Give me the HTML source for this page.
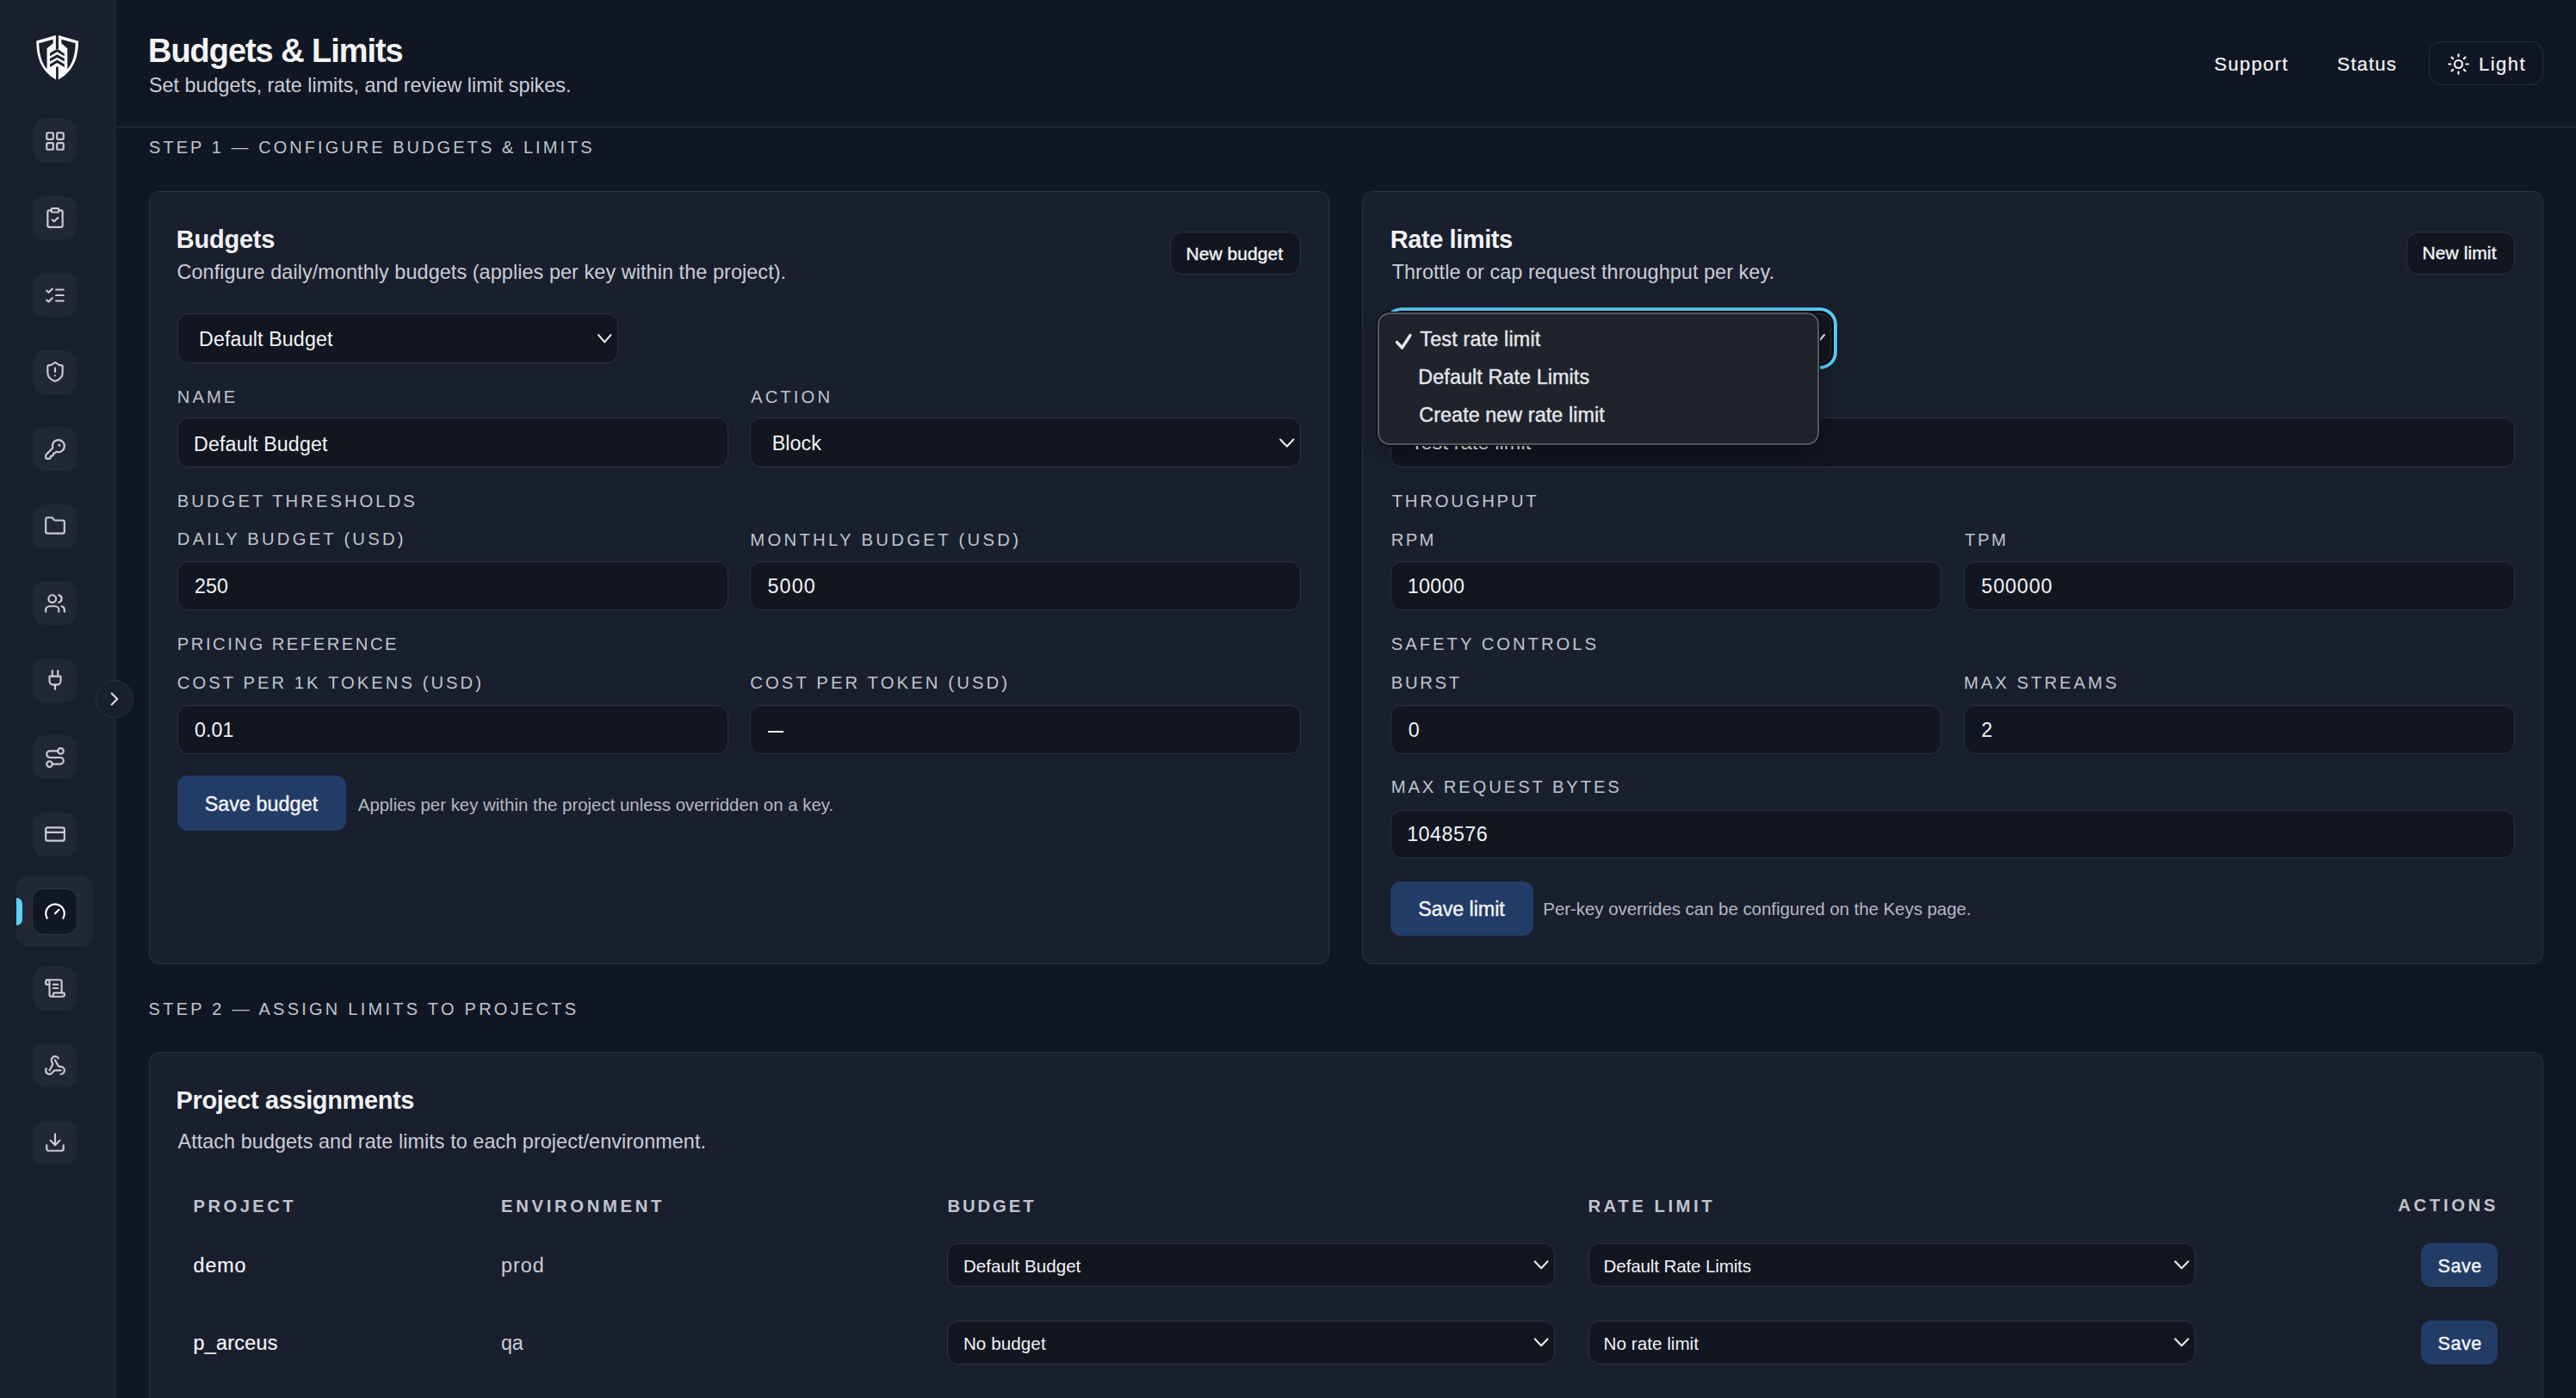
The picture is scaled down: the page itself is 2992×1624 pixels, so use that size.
<!DOCTYPE html>
<html><head><meta charset="utf-8"><title>Budgets &amp; Limits</title>
<style>
html,body{margin:0;padding:0;}
body{width:2992px;height:1624px;position:relative;overflow:hidden;background:#111722;font-family:"Liberation Sans",sans-serif;}
.t{position:absolute;white-space:pre;}
</style></head><body>
<script>(function(){var d=window.devicePixelRatio||1,w=window.innerWidth||2992;if(d>1.01&&Math.abs(w*d-2992)<4){document.documentElement.style.zoom=(1/d);}})();</script>
<div style="position:absolute;left:0px;top:0px;width:133px;height:1624px;background:#191f2c;border-radius:0px;"></div>
<div style="position:absolute;left:133px;top:0px;width:1px;height:1624px;background:#2a303c;border-radius:0px;"></div>
<svg style="position:absolute;left:30px;top:30px" width="74" height="70" viewBox="0 0 1478 1398">
<path fill="#fafafa" d="M245,350 L725,208 L1220,355 C1218,800 1060,1090 728,1262 C395,1090 245,800 245,350 Z"/>
<g fill="#191f2c">
<rect x="697" y="190" width="60" height="355"/>
<path d="M305,402 L632,315 L632,402 L490,522 L490,1005 C385,880 312,700 305,402 Z"/>
<path d="M1152,402 L825,315 L825,405 L965,525 L965,1005 C1070,880 1145,700 1152,402 Z"/>
<path d="M560,632 L700,548 L757,548 L895,650 L895,703 L727,605 L560,703 Z"/>
<path d="M560,760 L727,662 L895,760 L895,830 L727,732 L560,830 Z"/>
<path d="M560,887 L727,787 L895,887 L895,957 L727,857 L560,957 Z"/>
<path d="M700,1270 L700,960 Q727,925 755,960 L755,1270 Z"/>
</g></svg>
<div style="position:absolute;left:38px;top:138.0px;width:51px;height:51.0px;background:#212733;border-radius:14px;"></div>
<svg style="position:absolute;left:50.5px;top:150.5px;color:#c8ccd4" width="26" height="26" viewBox="0 0 24 24" fill="none" stroke="#c8ccd4" stroke-width="2" stroke-linecap="round" stroke-linejoin="round"><rect width="7" height="7" x="3" y="3" rx="1"/><rect width="7" height="7" x="14" y="3" rx="1"/><rect width="7" height="7" x="14" y="14" rx="1"/><rect width="7" height="7" x="3" y="14" rx="1"/></svg>
<div style="position:absolute;left:38px;top:227.5px;width:51px;height:51.0px;background:#212733;border-radius:14px;"></div>
<svg style="position:absolute;left:50.5px;top:240.0px;color:#c8ccd4" width="26" height="26" viewBox="0 0 24 24" fill="none" stroke="#c8ccd4" stroke-width="2" stroke-linecap="round" stroke-linejoin="round"><rect width="8" height="4" x="8" y="2" rx="1" ry="1"/><path d="M16 4h2a2 2 0 0 1 2 2v14a2 2 0 0 1-2 2H6a2 2 0 0 1-2-2V6a2 2 0 0 1 2-2h2"/><path d="m9 14 2 2 4-4"/></svg>
<div style="position:absolute;left:38px;top:317.0px;width:51px;height:51.0px;background:#212733;border-radius:14px;"></div>
<svg style="position:absolute;left:50.5px;top:329.5px;color:#c8ccd4" width="26" height="26" viewBox="0 0 24 24" fill="none" stroke="#c8ccd4" stroke-width="2" stroke-linecap="round" stroke-linejoin="round"><path d="m3 17 2 2 4-4"/><path d="m3 7 2 2 4-4"/><path d="M13 6h8"/><path d="M13 12h8"/><path d="M13 18h8"/></svg>
<div style="position:absolute;left:38px;top:406.5px;width:51px;height:51.0px;background:#212733;border-radius:14px;"></div>
<svg style="position:absolute;left:50.5px;top:419.0px;color:#c8ccd4" width="26" height="26" viewBox="0 0 24 24" fill="none" stroke="#c8ccd4" stroke-width="2" stroke-linecap="round" stroke-linejoin="round"><path d="M20 13c0 5-3.5 7.5-7.66 8.95a1 1 0 0 1-.67-.01C7.5 20.5 4 18 4 13V6a1 1 0 0 1 1-1c2 0 4.5-1.2 6.24-2.72a1.17 1.17 0 0 1 1.52 0C14.51 3.810 17 5 19 5a1 1 0 0 1 1 1z"/><path d="M12 8v4"/><path d="M12 16h.01"/></svg>
<div style="position:absolute;left:38px;top:496.0px;width:51px;height:51.0px;background:#212733;border-radius:14px;"></div>
<svg style="position:absolute;left:50.5px;top:508.5px;color:#c8ccd4" width="26" height="26" viewBox="0 0 24 24" fill="none" stroke="#c8ccd4" stroke-width="2" stroke-linecap="round" stroke-linejoin="round"><path d="M2.586 17.414A2 2 0 0 0 2 18.828V21a1 1 0 0 0 1 1h3a1 1 0 0 0 1-1v-1a1 1 0 0 1 1-1h1a1 1 0 0 0 1-1v-1a1 1 0 0 1 1-1h.172a2 2 0 0 0 1.414-.586l.814-.814a6.5 6.5 0 1 0-4-4z"/><circle cx="16.5" cy="7.5" r=".5" fill="currentColor"/></svg>
<div style="position:absolute;left:38px;top:585.5px;width:51px;height:51.0px;background:#212733;border-radius:14px;"></div>
<svg style="position:absolute;left:50.5px;top:598.0px;color:#c8ccd4" width="26" height="26" viewBox="0 0 24 24" fill="none" stroke="#c8ccd4" stroke-width="2" stroke-linecap="round" stroke-linejoin="round"><path d="M20 20a2 2 0 0 0 2-2V8a2 2 0 0 0-2-2h-7.9a2 2 0 0 1-1.69-.9L9.6 3.9A2 2 0 0 0 7.930 3H4a2 2 0 0 0-2 2v13a2 2 0 0 0 2 2Z"/></svg>
<div style="position:absolute;left:38px;top:675.0px;width:51px;height:51.0px;background:#212733;border-radius:14px;"></div>
<svg style="position:absolute;left:50.5px;top:687.5px;color:#c8ccd4" width="26" height="26" viewBox="0 0 24 24" fill="none" stroke="#c8ccd4" stroke-width="2" stroke-linecap="round" stroke-linejoin="round"><path d="M16 21v-2a4 4 0 0 0-4-4H6a4 4 0 0 0-4 4v2"/><circle cx="9" cy="7" r="4"/><path d="M22 21v-2a4 4 0 0 0-3-3.87"/><path d="M16 3.13a4 4 0 0 1 0 7.75"/></svg>
<div style="position:absolute;left:38px;top:764.5px;width:51px;height:51.0px;background:#212733;border-radius:14px;"></div>
<svg style="position:absolute;left:50.5px;top:777.0px;color:#c8ccd4" width="26" height="26" viewBox="0 0 24 24" fill="none" stroke="#c8ccd4" stroke-width="2" stroke-linecap="round" stroke-linejoin="round"><path d="M12 22v-5"/><path d="M9 8V2"/><path d="M15 8V2"/><path d="M18 8v5a4 4 0 0 1-4 4h-4a4 4 0 0 1-4-4V8Z"/></svg>
<div style="position:absolute;left:38px;top:854.0px;width:51px;height:51.0px;background:#212733;border-radius:14px;"></div>
<svg style="position:absolute;left:50.5px;top:866.5px;color:#c8ccd4" width="26" height="26" viewBox="0 0 24 24" fill="none" stroke="#c8ccd4" stroke-width="2" stroke-linecap="round" stroke-linejoin="round"><circle cx="6" cy="19" r="3"/><path d="M9 19h8.5a3.5 3.5 0 0 0 0-7h-11a3.5 3.5 0 0 1 0-7H15"/><circle cx="18" cy="5" r="3"/></svg>
<div style="position:absolute;left:38px;top:943.5px;width:51px;height:51.0px;background:#212733;border-radius:14px;"></div>
<svg style="position:absolute;left:50.5px;top:956.0px;color:#c8ccd4" width="26" height="26" viewBox="0 0 24 24" fill="none" stroke="#c8ccd4" stroke-width="2" stroke-linecap="round" stroke-linejoin="round"><rect width="20" height="14" x="2" y="5" rx="2"/><line x1="2" x2="22" y1="10" y2="10"/></svg>
<div style="position:absolute;left:19px;top:1016.5px;width:88.5px;height:83.5px;background:#212733;border-radius:15px;"></div>
<div style="position:absolute;left:37px;top:1032px;width:53px;height:54px;background:#111722;border-radius:14px;border:1px solid #2c323e;box-sizing:border-box;"></div>
<div style="position:absolute;left:19px;top:1043px;width:7px;height:32px;background:#5fd0f8;border-radius:0px;border-radius:0 7px 7px 0;"></div>
<svg style="position:absolute;left:50.5px;top:1046.0px;color:#ffffff" width="26" height="26" viewBox="0 0 24 24" fill="none" stroke="#ffffff" stroke-width="2" stroke-linecap="round" stroke-linejoin="round"><path d="m12 14 4-4"/><path d="M3.34 19a10 10 0 1 1 17.32 0"/></svg>
<div style="position:absolute;left:38px;top:1122.5px;width:51px;height:51.0px;background:#212733;border-radius:14px;"></div>
<svg style="position:absolute;left:50.5px;top:1135.0px;color:#c8ccd4" width="26" height="26" viewBox="0 0 24 24" fill="none" stroke="#c8ccd4" stroke-width="2" stroke-linecap="round" stroke-linejoin="round"><path d="M15 12h-5"/><path d="M15 8h-5"/><path d="M19 17V5a2 2 0 0 0-2-2H4"/><path d="M8 21h12a2 2 0 0 0 2-2v-1a1 1 0 0 0-1-1H11a1 1 0 0 0-1 1v1a2 2 0 1 1-4 0V5a2 2 0 1 0-4 0v2a1 1 0 0 0 1 1h3"/></svg>
<div style="position:absolute;left:38px;top:1212.0px;width:51px;height:51.0px;background:#212733;border-radius:14px;"></div>
<svg style="position:absolute;left:50.5px;top:1224.5px;color:#c8ccd4" width="26" height="26" viewBox="0 0 24 24" fill="none" stroke="#c8ccd4" stroke-width="2" stroke-linecap="round" stroke-linejoin="round"><path d="M18 16.98h-5.99c-1.1 0-1.95.94-2.48 1.9A4 4 0 0 1 2 17c.01-.7.2-1.4.57-2"/><path d="m6 17 3.13-5.78c.53-.97.1-2.18-.5-3.1a4 4 0 1 1 6.89-4.06"/><path d="m12 6 3.13 5.73C15.66 12.7 16.9 13 18 13a4 4 0 0 1 0 8"/></svg>
<div style="position:absolute;left:38px;top:1301.5px;width:51px;height:51.0px;background:#212733;border-radius:14px;"></div>
<svg style="position:absolute;left:50.5px;top:1314.0px;color:#c8ccd4" width="26" height="26" viewBox="0 0 24 24" fill="none" stroke="#c8ccd4" stroke-width="2" stroke-linecap="round" stroke-linejoin="round"><path d="M21 15v4a2 2 0 0 1-2 2H5a2 2 0 0 1-2-2v-4"/><polyline points="7 10 12 15 17 10"/><line x1="12" x2="12" y1="15" y2="3"/></svg>
<div style="position:absolute;left:111px;top:790px;width:44px;height:44px;background:#191f2c;border-radius:22px;border:1px solid #2a303c;box-sizing:border-box;"></div>
<svg style="position:absolute;left:120.2px;top:799.3px;color:#d9dce2" width="26" height="26" viewBox="0 0 24 24" fill="none" stroke="#d9dce2" stroke-width="2" stroke-linecap="round" stroke-linejoin="round"><path d="m9 18 6-6-6-6"/></svg>
<div style="position:absolute;left:134px;top:147px;width:2858px;height:1px;background:#2a303c;border-radius:0px;"></div>
<div class="t" style="left:172px;top:40px;font-size:38px;line-height:38px;font-weight:700;letter-spacing:-1.047px;color:#f3f4f6;">Budgets &amp; Limits</div>
<div class="t" style="left:173px;top:88px;font-size:23.4px;line-height:23.4px;font-weight:400;letter-spacing:-0.02px;color:#c9ced6;">Set budgets, rate limits, and review limit spikes.</div>
<div class="t" style="left:2571.8px;top:64px;font-size:22px;line-height:22px;font-weight:400;letter-spacing:1.317px;color:#f3f4f6;-webkit-text-stroke:0.2px #f3f4f6;">Support</div>
<div class="t" style="left:2714.6px;top:64px;font-size:22px;line-height:22px;font-weight:400;letter-spacing:1.22px;color:#f3f4f6;-webkit-text-stroke:0.2px #f3f4f6;">Status</div>
<div style="position:absolute;left:2821px;top:48px;width:133px;height:51px;background:#111722;border-radius:14px;border:1px solid #2a303c;box-sizing:border-box;"></div>
<svg style="position:absolute;left:2841.5px;top:60.5px;color:#f3f4f6" width="27" height="27" viewBox="0 0 24 24" fill="none" stroke="#f3f4f6" stroke-width="1.95" stroke-linecap="round" stroke-linejoin="round"><circle cx="12" cy="12" r="4"/><path d="M12 2v2"/><path d="M12 20v2"/><path d="m4.93 4.93 1.41 1.41"/><path d="m17.66 17.66 1.41 1.41"/><path d="M2 12h2"/><path d="M20 12h2"/><path d="m6.34 17.66-1.41 1.41"/><path d="m19.07 4.93-1.41 1.41"/></svg>
<div class="t" style="left:2879px;top:64px;font-size:22px;line-height:22px;font-weight:400;letter-spacing:1.45px;color:#f3f4f6;-webkit-text-stroke:0.2px #f3f4f6;">Light</div>
<div class="t" style="left:173px;top:161px;font-size:20px;line-height:20px;font-weight:400;letter-spacing:3.053px;color:#bfc4cd;">STEP 1 — CONFIGURE BUDGETS &amp; LIMITS</div>
<div class="t" style="left:172.6px;top:1162px;font-size:20px;line-height:20px;font-weight:400;letter-spacing:3.255px;color:#bfc4cd;">STEP 2 — ASSIGN LIMITS TO PROJECTS</div>
<div style="position:absolute;left:173px;top:222px;width:1371px;height:898px;background:#1a1f2d;border-radius:12px;border:1px solid #2b313d;box-sizing:border-box;"></div>
<div class="t" style="left:204.8px;top:264px;font-size:29px;line-height:29px;font-weight:700;letter-spacing:-0.233px;color:#f3f4f6;">Budgets</div>
<div class="t" style="left:205.5px;top:305px;font-size:23.4px;line-height:23.4px;font-weight:400;letter-spacing:0.081px;color:#c9ced6;">Configure daily/monthly budgets (applies per key within the project).</div>
<div style="position:absolute;left:1359px;top:268.5px;width:152px;height:50.5px;background:#111620;border-radius:14px;border:1px solid #2b313d;box-sizing:border-box;"></div>
<div class="t" style="left:1377.4px;top:284px;font-size:21px;line-height:21px;font-weight:400;letter-spacing:0.078px;color:#f3f4f6;-webkit-text-stroke:0.4px #f3f4f6;">New budget</div>
<div style="position:absolute;left:206px;top:364px;width:512px;height:58px;background:#111620;border-radius:13px;border:1px solid #2b313d;box-sizing:border-box;"></div>
<div class="t" style="left:231px;top:383px;font-size:23.3px;line-height:23.3px;font-weight:400;letter-spacing:0.108px;color:#f3f4f6;">Default Budget</div>
<svg style="position:absolute;left:0;top:0;overflow:visible" width="1" height="1"><polyline points="695.1,389.1 702.25,397.4 709.4,389.1" fill="none" stroke="#e5e7eb" stroke-width="2.2" stroke-linecap="round" stroke-linejoin="round"/></svg>
<div class="t" style="left:205.8px;top:451px;font-size:20.3px;line-height:20.3px;font-weight:400;letter-spacing:2.967px;color:#bfc4cd;">NAME</div>
<div class="t" style="left:872px;top:451px;font-size:20.3px;line-height:20.3px;font-weight:400;letter-spacing:3.1px;color:#bfc4cd;">ACTION</div>
<div style="position:absolute;left:206px;top:485px;width:639.5px;height:57.5px;background:#111620;border-radius:13px;border:1px solid #2b313d;box-sizing:border-box;"></div>
<div class="t" style="left:225px;top:505px;font-size:23.3px;line-height:23.3px;font-weight:400;letter-spacing:0.108px;color:#f3f4f6;">Default Budget</div>
<div style="position:absolute;left:871px;top:485px;width:640px;height:57.5px;background:#111620;border-radius:13px;border:1px solid #2b313d;box-sizing:border-box;"></div>
<div class="t" style="left:896.7px;top:504px;font-size:23.3px;line-height:23.3px;font-weight:400;letter-spacing:0.05px;color:#f3f4f6;">Block</div>
<svg style="position:absolute;left:0;top:0;overflow:visible" width="1" height="1"><polyline points="1487.1,510.6 1494.75,518.6 1502.4,510.6" fill="none" stroke="#e5e7eb" stroke-width="2.2" stroke-linecap="round" stroke-linejoin="round"/></svg>
<div class="t" style="left:205.8px;top:572px;font-size:20.3px;line-height:20.3px;font-weight:400;letter-spacing:3.0px;color:#bfc4cd;">BUDGET THRESHOLDS</div>
<div class="t" style="left:205.8px;top:616px;font-size:20.3px;line-height:20.3px;font-weight:400;letter-spacing:3.188px;color:#bfc4cd;">DAILY BUDGET (USD)</div>
<div class="t" style="left:871.2px;top:617px;font-size:20.3px;line-height:20.3px;font-weight:400;letter-spacing:3.3px;color:#bfc4cd;">MONTHLY BUDGET (USD)</div>
<div style="position:absolute;left:206px;top:652px;width:639.5px;height:56.5px;background:#111620;border-radius:13px;border:1px solid #2b313d;box-sizing:border-box;"></div>
<div class="t" style="left:226px;top:670px;font-size:23.3px;line-height:23.3px;font-weight:400;letter-spacing:0.0px;color:#f3f4f6;">250</div>
<div style="position:absolute;left:871px;top:652px;width:640px;height:56.5px;background:#111620;border-radius:13px;border:1px solid #2b313d;box-sizing:border-box;"></div>
<div class="t" style="left:891.6px;top:670px;font-size:23.3px;line-height:23.3px;font-weight:400;letter-spacing:1.067px;color:#f3f4f6;">5000</div>
<div class="t" style="left:205.8px;top:738px;font-size:20.3px;line-height:20.3px;font-weight:400;letter-spacing:2.475px;color:#bfc4cd;">PRICING REFERENCE</div>
<div class="t" style="left:205.8px;top:783px;font-size:20.3px;line-height:20.3px;font-weight:400;letter-spacing:3.009px;color:#bfc4cd;">COST PER 1K TOKENS (USD)</div>
<div class="t" style="left:871.2px;top:783px;font-size:20.3px;line-height:20.3px;font-weight:400;letter-spacing:3.095px;color:#bfc4cd;">COST PER TOKEN (USD)</div>
<div style="position:absolute;left:206px;top:818.5px;width:639.5px;height:57.0px;background:#111620;border-radius:13px;border:1px solid #2b313d;box-sizing:border-box;"></div>
<div class="t" style="left:226px;top:837px;font-size:23.3px;line-height:23.3px;font-weight:400;letter-spacing:0.0px;color:#f3f4f6;">0.01</div>
<div style="position:absolute;left:871px;top:818.5px;width:640px;height:57.0px;background:#111620;border-radius:13px;border:1px solid #2b313d;box-sizing:border-box;"></div>
<div style="position:absolute;left:892px;top:849px;width:18px;height:2px;background:#f3f4f6;border-radius:0px;"></div>
<div style="position:absolute;left:206px;top:901px;width:196px;height:64px;background:#223c68;border-radius:12px;"></div>
<div class="t" style="left:237.7px;top:923px;font-size:23.3px;line-height:23.3px;font-weight:400;letter-spacing:0.06px;color:#f3f4f6;-webkit-text-stroke:0.4px #f3f4f6;">Save budget</div>
<div class="t" style="left:415.8px;top:925px;font-size:20.4px;line-height:20.4px;font-weight:400;letter-spacing:0.013px;color:#b4b9c3;">Applies per key within the project unless overridden on a key.</div>
<div style="position:absolute;left:1582px;top:222px;width:1372px;height:898px;background:#1a1f2d;border-radius:12px;border:1px solid #2b313d;box-sizing:border-box;"></div>
<div class="t" style="left:1614.7px;top:264px;font-size:29px;line-height:29px;font-weight:700;letter-spacing:-0.41px;color:#f3f4f6;">Rate limits</div>
<div class="t" style="left:1616.7px;top:305px;font-size:23.4px;line-height:23.4px;font-weight:400;letter-spacing:0.062px;color:#c9ced6;">Throttle or cap request throughput per key.</div>
<div style="position:absolute;left:2795px;top:268.5px;width:126px;height:50.5px;background:#111620;border-radius:14px;border:1px solid #2b313d;box-sizing:border-box;"></div>
<div class="t" style="left:2813.4px;top:283px;font-size:21px;line-height:21px;font-weight:400;letter-spacing:0.113px;color:#f3f4f6;-webkit-text-stroke:0.4px #f3f4f6;">New limit</div>
<div style="position:absolute;left:1615px;top:364px;width:512px;height:58px;background:#111620;border-radius:13px;border:1px solid #2b313d;box-sizing:border-box;box-shadow:0 0 0 3px #0a0e15,0 0 0 6.8px #5ccdf6;"></div>
<svg style="position:absolute;left:0;top:0;overflow:visible" width="1" height="1"><polyline points="2104.1,389.1 2111.5,397.4 2118.9,389.1" fill="none" stroke="#e5e7eb" stroke-width="2.2" stroke-linecap="round" stroke-linejoin="round"/></svg>
<div style="position:absolute;left:1615px;top:485px;width:1306px;height:57.5px;background:#111620;border-radius:13px;border:1px solid #2b313d;box-sizing:border-box;"></div>
<div class="t" style="left:1638.7px;top:503px;font-size:23.3px;line-height:23.3px;font-weight:400;letter-spacing:0.164px;color:#f3f4f6;">Test rate limit</div>
<div class="t" style="left:1616.7px;top:572px;font-size:20.3px;line-height:20.3px;font-weight:400;letter-spacing:2.767px;color:#bfc4cd;">THROUGHPUT</div>
<div class="t" style="left:1615.7px;top:617px;font-size:20.3px;line-height:20.3px;font-weight:400;letter-spacing:2.35px;color:#bfc4cd;">RPM</div>
<div class="t" style="left:2281.9px;top:617px;font-size:20.3px;line-height:20.3px;font-weight:400;letter-spacing:2.65px;color:#bfc4cd;">TPM</div>
<div style="position:absolute;left:1615px;top:652px;width:640px;height:56.5px;background:#111620;border-radius:13px;border:1px solid #2b313d;box-sizing:border-box;"></div>
<div class="t" style="left:1634.7px;top:670px;font-size:23.3px;line-height:23.3px;font-weight:400;letter-spacing:0.375px;color:#f3f4f6;">10000</div>
<div style="position:absolute;left:2281px;top:652px;width:640px;height:56.5px;background:#111620;border-radius:13px;border:1px solid #2b313d;box-sizing:border-box;"></div>
<div class="t" style="left:2301.3px;top:670px;font-size:23.3px;line-height:23.3px;font-weight:400;letter-spacing:0.9px;color:#f3f4f6;">500000</div>
<div class="t" style="left:1615.7px;top:738px;font-size:20.3px;line-height:20.3px;font-weight:400;letter-spacing:2.971px;color:#bfc4cd;">SAFETY CONTROLS</div>
<div class="t" style="left:1615.7px;top:783px;font-size:20.3px;line-height:20.3px;font-weight:400;letter-spacing:2.7px;color:#bfc4cd;">BURST</div>
<div class="t" style="left:2280.9px;top:783px;font-size:20.3px;line-height:20.3px;font-weight:400;letter-spacing:3.0px;color:#bfc4cd;">MAX STREAMS</div>
<div style="position:absolute;left:1615px;top:818.5px;width:640px;height:57.0px;background:#111620;border-radius:13px;border:1px solid #2b313d;box-sizing:border-box;"></div>
<div class="t" style="left:1635.7px;top:837px;font-size:23.3px;line-height:23.3px;font-weight:400;letter-spacing:0.0px;color:#f3f4f6;">0</div>
<div style="position:absolute;left:2281px;top:818.5px;width:640px;height:57.0px;background:#111620;border-radius:13px;border:1px solid #2b313d;box-sizing:border-box;"></div>
<div class="t" style="left:2301.3px;top:837px;font-size:23.3px;line-height:23.3px;font-weight:400;letter-spacing:0.0px;color:#f3f4f6;">2</div>
<div class="t" style="left:1615.7px;top:904px;font-size:20.3px;line-height:20.3px;font-weight:400;letter-spacing:2.862px;color:#bfc4cd;">MAX REQUEST BYTES</div>
<div style="position:absolute;left:1615px;top:940.5px;width:1306px;height:56.5px;background:#111620;border-radius:13px;border:1px solid #2b313d;box-sizing:border-box;"></div>
<div class="t" style="left:1634.2px;top:958px;font-size:23.3px;line-height:23.3px;font-weight:400;letter-spacing:0.467px;color:#f3f4f6;">1048576</div>
<div style="position:absolute;left:1615px;top:1023.5px;width:166px;height:63.5px;background:#223c68;border-radius:12px;"></div>
<div class="t" style="left:1647.3px;top:1045px;font-size:23.3px;line-height:23.3px;font-weight:400;letter-spacing:-0.056px;color:#f3f4f6;-webkit-text-stroke:0.4px #f3f4f6;">Save limit</div>
<div class="t" style="left:1792.3px;top:1046px;font-size:20.4px;line-height:20.4px;font-weight:400;letter-spacing:-0.008px;color:#b4b9c3;">Per-key overrides can be configured on the Keys page.</div>
<div style="position:absolute;left:1599.5px;top:363px;width:513.0px;height:154px;background:#1f242c;border-radius:14px;border:1px solid #54585f;box-sizing:border-box;box-shadow:0 0 0 1px #05070a,0 8px 24px rgba(0,0,0,.35);border-width:2px;"></div>
<svg style="position:absolute;left:0;top:0;overflow:visible" width="1" height="1"><polyline points="1622.5,397.5 1628.5,404 1638,389.5" fill="none" stroke="#e6e7ea" stroke-width="3.4" stroke-linecap="round" stroke-linejoin="round"/></svg>
<div class="t" style="left:1649.3px;top:383px;font-size:23.3px;line-height:23.3px;font-weight:400;letter-spacing:0.193px;color:#e6e7ea;-webkit-text-stroke:0.4px #e6e7ea;">Test rate limit</div>
<div class="t" style="left:1647.3px;top:427px;font-size:23.3px;line-height:23.3px;font-weight:400;letter-spacing:0.111px;color:#e6e7ea;-webkit-text-stroke:0.4px #e6e7ea;">Default Rate Limits</div>
<div class="t" style="left:1648.3px;top:471px;font-size:23.3px;line-height:23.3px;font-weight:400;letter-spacing:0.085px;color:#e6e7ea;-webkit-text-stroke:0.4px #e6e7ea;">Create new rate limit</div>
<div style="position:absolute;left:173px;top:1222px;width:2781px;height:478px;background:#1a1f2d;border-radius:12px;border:1px solid #2b313d;box-sizing:border-box;"></div>
<div class="t" style="left:204.5px;top:1264px;font-size:29px;line-height:29px;font-weight:700;letter-spacing:-0.372px;color:#f3f4f6;">Project assignments</div>
<div class="t" style="left:206.5px;top:1315px;font-size:23.4px;line-height:23.4px;font-weight:400;letter-spacing:0.064px;color:#c9ced6;">Attach budgets and rate limits to each project/environment.</div>
<div class="t" style="left:224.6px;top:1391px;font-size:20.3px;line-height:20.3px;font-weight:700;letter-spacing:3.383px;color:#bfc4cd;">PROJECT</div>
<div class="t" style="left:582px;top:1391px;font-size:20.3px;line-height:20.3px;font-weight:700;letter-spacing:3.66px;color:#bfc4cd;">ENVIRONMENT</div>
<div class="t" style="left:1100.4px;top:1391px;font-size:20.3px;line-height:20.3px;font-weight:700;letter-spacing:2.9px;color:#bfc4cd;">BUDGET</div>
<div class="t" style="left:1844.4px;top:1391px;font-size:20.3px;line-height:20.3px;font-weight:700;letter-spacing:3.544px;color:#bfc4cd;">RATE LIMIT</div>
<div class="t" style="left:2785.3px;top:1390px;font-size:20.3px;line-height:20.3px;font-weight:700;letter-spacing:3.633px;color:#bfc4cd;">ACTIONS</div>
<div class="t" style="left:224.6px;top:1459px;font-size:23.3px;line-height:23.3px;font-weight:400;letter-spacing:0.9px;color:#f3f4f6;-webkit-text-stroke:0.2px #f3f4f6;">demo</div>
<div class="t" style="left:582px;top:1459px;font-size:23.3px;line-height:23.3px;font-weight:400;letter-spacing:1.033px;color:#c9ced6;">prod</div>
<div class="t" style="left:224.6px;top:1549px;font-size:23.3px;line-height:23.3px;font-weight:400;letter-spacing:0.286px;color:#f3f4f6;-webkit-text-stroke:0.2px #f3f4f6;">p_arceus</div>
<div class="t" style="left:582px;top:1549px;font-size:23.3px;line-height:23.3px;font-weight:400;letter-spacing:-0.1px;color:#c9ced6;">qa</div>
<div style="position:absolute;left:1100px;top:1444px;width:706px;height:50.5px;background:#111620;border-radius:13px;border:1px solid #2b313d;box-sizing:border-box;"></div>
<div class="t" style="left:1118.9px;top:1461px;font-size:20.6px;line-height:20.6px;font-weight:400;letter-spacing:0.015px;color:#f3f4f6;">Default Budget</div>
<svg style="position:absolute;left:0;top:0;overflow:visible" width="1" height="1"><polyline points="1782.8,1465.3999999999999 1790.15,1473.2 1797.5,1465.3999999999999" fill="none" stroke="#e5e7eb" stroke-width="2.2" stroke-linecap="round" stroke-linejoin="round"/></svg>
<div style="position:absolute;left:1844.5px;top:1444px;width:705.0px;height:50.5px;background:#111620;border-radius:13px;border:1px solid #2b313d;box-sizing:border-box;"></div>
<div class="t" style="left:1862.6px;top:1461px;font-size:20.6px;line-height:20.6px;font-weight:400;letter-spacing:-0.144px;color:#f3f4f6;">Default Rate Limits</div>
<svg style="position:absolute;left:0;top:0;overflow:visible" width="1" height="1"><polyline points="2526.5,1465.3999999999999 2534.0,1473.2 2541.5,1465.3999999999999" fill="none" stroke="#e5e7eb" stroke-width="2.2" stroke-linecap="round" stroke-linejoin="round"/></svg>
<div style="position:absolute;left:1100px;top:1534px;width:706px;height:50.5px;background:#111620;border-radius:13px;border:1px solid #2b313d;box-sizing:border-box;"></div>
<div class="t" style="left:1118.9px;top:1551px;font-size:20.6px;line-height:20.6px;font-weight:400;letter-spacing:0.087px;color:#f3f4f6;">No budget</div>
<svg style="position:absolute;left:0;top:0;overflow:visible" width="1" height="1"><polyline points="1782.8,1555.3999999999999 1790.15,1563.2 1797.5,1555.3999999999999" fill="none" stroke="#e5e7eb" stroke-width="2.2" stroke-linecap="round" stroke-linejoin="round"/></svg>
<div style="position:absolute;left:1844.5px;top:1534px;width:705.0px;height:50.5px;background:#111620;border-radius:13px;border:1px solid #2b313d;box-sizing:border-box;"></div>
<div class="t" style="left:1862.6px;top:1551px;font-size:20.6px;line-height:20.6px;font-weight:400;letter-spacing:0.042px;color:#f3f4f6;">No rate limit</div>
<svg style="position:absolute;left:0;top:0;overflow:visible" width="1" height="1"><polyline points="2526.5,1555.3999999999999 2534.0,1563.2 2541.5,1555.3999999999999" fill="none" stroke="#e5e7eb" stroke-width="2.2" stroke-linecap="round" stroke-linejoin="round"/></svg>
<div style="position:absolute;left:2812px;top:1444px;width:89px;height:50.5px;background:#223c68;border-radius:12px;"></div>
<div class="t" style="left:2831.5px;top:1461px;font-size:21.5px;line-height:21.5px;font-weight:400;letter-spacing:0.6px;color:#f3f4f6;-webkit-text-stroke:0.4px #f3f4f6;">Save</div>
<div style="position:absolute;left:2812px;top:1534px;width:89px;height:50.5px;background:#223c68;border-radius:12px;"></div>
<div class="t" style="left:2831.5px;top:1551px;font-size:21.5px;line-height:21.5px;font-weight:400;letter-spacing:0.6px;color:#f3f4f6;-webkit-text-stroke:0.4px #f3f4f6;">Save</div>
</body></html>
